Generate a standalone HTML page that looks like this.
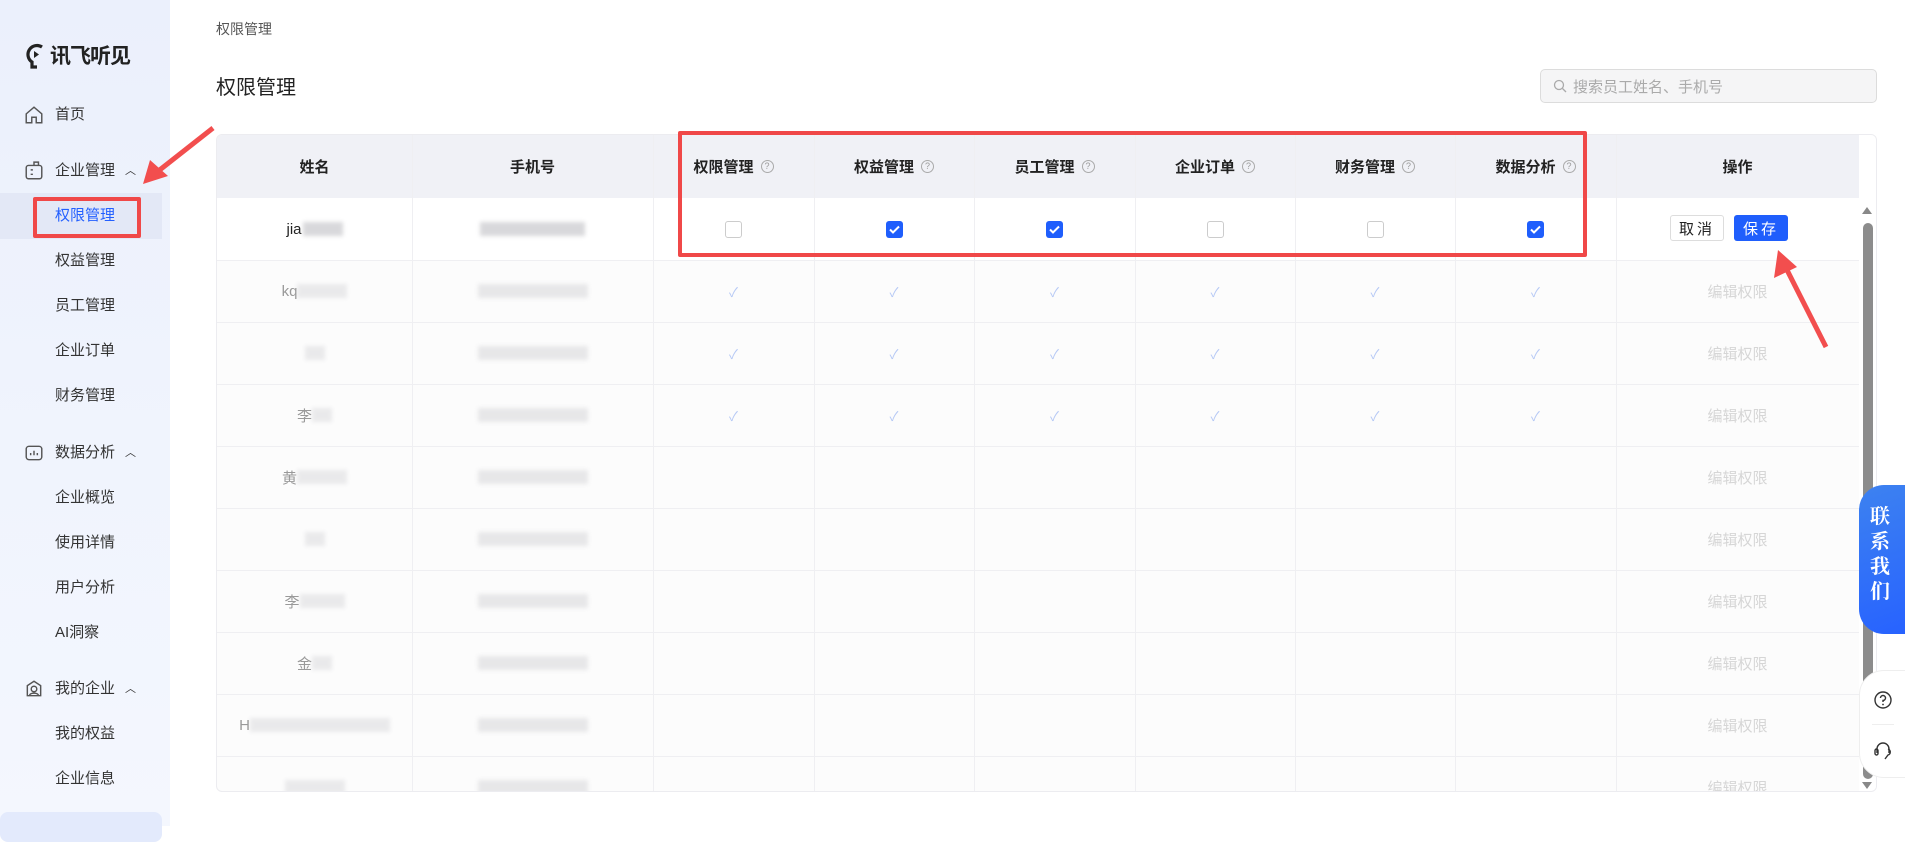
<!DOCTYPE html>
<html><head><meta charset="utf-8"><style>
*{margin:0;padding:0;box-sizing:border-box}
body{width:1905px;height:826px;overflow:hidden;background:#fff;font-family:"Liberation Sans","Noto Sans CJK SC",sans-serif;color:#333;position:relative}
.a{position:absolute}
.side{left:0;top:0;width:170px;height:826px;background:linear-gradient(180deg,#ebf0fc,#f4f7fe)}
.mi{position:absolute;left:55px;font-size:15px;color:#333;line-height:20px}
.sec{position:absolute;left:24px;font-size:15px;color:#333;line-height:20px;display:flex;align-items:center}
.sec svg{margin-right:11px}
.car{margin-left:10px;font-size:11px}
.tbl{left:216px;top:134px;width:1661px;height:658px;border:1px solid #ececf0;border-radius:6px;overflow:hidden;background:#fcfcfc}
.hd{position:absolute;top:0;left:0;height:63px;width:1642px;background:#f0f1f6}
.cell{position:absolute;display:flex;align-items:center;justify-content:center;font-size:15px}
.hcell{font-weight:bold;color:#222}
.q{display:inline-block;width:13px;height:13px;border:1px solid #aaa;border-radius:50%;font-size:9px;color:#999;line-height:11px;text-align:center;margin-left:7px;font-weight:normal}
.vl{position:absolute;top:0;width:1px;height:658px;background:#efeff2}
.hl{position:absolute;left:0;width:1642px;height:1px;background:#efeff2}
.cb{width:17px;height:17px;border:1px solid #ccc;border-radius:3px;background:#fff}
.cbx{width:17px;height:17px;border-radius:3px;background:#1f5efc;display:flex;align-items:center;justify-content:center}
.ck{color:#b5c8f5;font-size:13px}
.ed{color:#d6d6d6;font-size:15px}
.blur{display:inline-block;height:14px;background:#c8c8cc;filter:blur(2px);opacity:.7}
</style></head><body>
<div class="a side">
  <div class="a" style="left:26px;top:40px;display:flex;align-items:center">
    <svg width="20" height="30" viewBox="0 0 20 30"><path d="M16 7 A8 8 0 1 0 6 22 L6 27 L11 27" fill="none" stroke="#222" stroke-width="3.2"/><path d="M8 11 L13 14.5 L8 18Z" fill="#222"/></svg>
    <span style="font-size:21px;font-weight:bold;color:#222;margin-left:4px;letter-spacing:-1px">讯飞听见</span>
  </div>
  <div class="sec" style="top:105px"><svg width="20" height="20" viewBox="0 0 18 18"><path d="M2 8 L9 2 L16 8 V16 H11 V11 H7 V16 H2Z" fill="none" stroke="#555" stroke-width="1.3"/></svg>首页</div>
  <div class="sec" style="top:161px"><svg width="20" height="20" viewBox="0 0 18 18"><rect x="2" y="4" width="14" height="12" rx="2" fill="none" stroke="#555" stroke-width="1.3"/><path d="M9 4 V1 H13 V4 M6 8 H8 M6 12 H8" stroke="#555" stroke-width="1.3" fill="none"/></svg>企业管理<span class="car">︿</span></div>
  <div class="a" style="left:0;top:193px;width:162px;height:46px;background:#e3e8f6"></div>
  <div class="a" style="left:33px;top:197px;width:108px;height:41px;border:4px solid #f04848;border-radius:2px"></div>
  <div class="mi" style="top:206px;color:#2460ff">权限管理</div>
  <div class="mi" style="top:251px">权益管理</div>
  <div class="mi" style="top:296px">员工管理</div>
  <div class="mi" style="top:341px">企业订单</div>
  <div class="mi" style="top:386px">财务管理</div>
  <div class="sec" style="top:443px"><svg width="20" height="20" viewBox="0 0 18 18"><rect x="2" y="3" width="14" height="12" rx="2.5" fill="none" stroke="#555" stroke-width="1.3"/><path d="M6 11 V9 M9 11 V7 M12 11 V9" stroke="#555" stroke-width="1.3"/></svg>数据分析<span class="car">︿</span></div>
  <div class="mi" style="top:488px">企业概览</div>
  <div class="mi" style="top:533px">使用详情</div>
  <div class="mi" style="top:578px">用户分析</div>
  <div class="mi" style="top:623px">AI洞察</div>
  <div class="sec" style="top:679px"><svg width="20" height="20" viewBox="0 0 18 18"><path d="M3 15 V6 L9 2 L15 6 V15Z" fill="none" stroke="#555" stroke-width="1.3"/><circle cx="9" cy="9" r="2.5" fill="none" stroke="#555" stroke-width="1.3"/><path d="M5 15 C5 12 13 12 13 15" fill="none" stroke="#555" stroke-width="1.3"/></svg>我的企业<span class="car">︿</span></div>
  <div class="mi" style="top:724px">我的权益</div>
  <div class="mi" style="top:769px">企业信息</div>
  <div class="a" style="left:0;top:812px;width:162px;height:30px;background:#e3eafc;border-radius:8px"></div>
</div>

<div class="a" style="left:216px;top:19px;font-size:14px;color:#555">权限管理</div>
<div class="a" style="left:216px;top:71px;font-size:20px;color:#222">权限管理</div>
<div class="a" style="left:1540px;top:69px;width:337px;height:34px;border:1px solid #dcdcdc;border-radius:5px;background:#f5f5f6;display:flex;align-items:center;padding-left:12px;font-size:15px;color:#aaa">
  <svg width="14" height="14" viewBox="0 0 14 14" style="margin-right:6px"><circle cx="6" cy="6" r="4.5" fill="none" stroke="#aaa" stroke-width="1.3"/><path d="M9.5 9.5 L13 13" stroke="#aaa" stroke-width="1.3"/></svg>搜索员工姓名、手机号
</div>

<div class="a tbl">
  <div class="hd"></div>
  <div class="a" style="left:0;top:63px;width:1642px;height:62px;background:#fff"></div>
  <div class="vl" style="left:195px"></div><div class="vl" style="left:436px"></div><div class="vl" style="left:597px"></div><div class="vl" style="left:757px"></div><div class="vl" style="left:918px"></div><div class="vl" style="left:1078px"></div><div class="vl" style="left:1238px"></div><div class="vl" style="left:1399px"></div>
  <div class="hl" style="top:125px"></div><div class="hl" style="top:187px"></div><div class="hl" style="top:249px"></div><div class="hl" style="top:311px"></div><div class="hl" style="top:373px"></div><div class="hl" style="top:435px"></div><div class="hl" style="top:497px"></div><div class="hl" style="top:559px"></div><div class="hl" style="top:621px"></div>
  <div class="cell hcell" style="left:0;top:0;width:195px;height:63px">姓名</div>
  <div class="cell hcell" style="left:195px;top:0;width:241px;height:63px">手机号</div>
  <div class="cell hcell" style="left:436px;top:0;width:161px;height:63px">权限管理<span class="q">?</span></div>
  <div class="cell hcell" style="left:597px;top:0;width:160px;height:63px">权益管理<span class="q">?</span></div>
  <div class="cell hcell" style="left:757px;top:0;width:161px;height:63px">员工管理<span class="q">?</span></div>
  <div class="cell hcell" style="left:918px;top:0;width:160px;height:63px">企业订单<span class="q">?</span></div>
  <div class="cell hcell" style="left:1078px;top:0;width:160px;height:63px">财务管理<span class="q">?</span></div>
  <div class="cell hcell" style="left:1238px;top:0;width:161px;height:63px">数据分析<span class="q">?</span></div>
  <div class="cell hcell" style="left:1399px;top:0;width:243px;height:63px">操作</div>
  <div class="cell" style="left:0;top:63px;width:195px;height:62px;color:#222">jia<span class="blur" style="width:40px;margin-left:1px"></span></div>
  <div class="cell" style="left:195px;top:63px;width:241px;height:62px"><span class="blur" style="width:105px"></span></div>
  <div class="cell" style="left:436px;top:63px;width:161px;height:62px"><div class="cb"></div></div>
  <div class="cell" style="left:597px;top:63px;width:160px;height:62px"><div class="cbx"><svg width="11" height="9" viewBox="0 0 11 9"><path d="M1 4.5 L4 7.5 L10 1.5" fill="none" stroke="#fff" stroke-width="2"/></svg></div></div>
  <div class="cell" style="left:757px;top:63px;width:161px;height:62px"><div class="cbx"><svg width="11" height="9" viewBox="0 0 11 9"><path d="M1 4.5 L4 7.5 L10 1.5" fill="none" stroke="#fff" stroke-width="2"/></svg></div></div>
  <div class="cell" style="left:918px;top:63px;width:160px;height:62px"><div class="cb"></div></div>
  <div class="cell" style="left:1078px;top:63px;width:160px;height:62px"><div class="cb"></div></div>
  <div class="cell" style="left:1238px;top:63px;width:161px;height:62px"><div class="cbx"><svg width="11" height="9" viewBox="0 0 11 9"><path d="M1 4.5 L4 7.5 L10 1.5" fill="none" stroke="#fff" stroke-width="2"/></svg></div></div>
  <div class="a" style="left:1453px;top:80px;width:54px;height:26px;border:1px solid #ddd;border-radius:3px;background:#fff;font-size:15px;display:flex;align-items:center;justify-content:center;letter-spacing:3px;color:#222">取消</div>
  <div class="a" style="left:1517px;top:80px;width:54px;height:26px;border-radius:3px;background:#1f5efc;font-size:15px;display:flex;align-items:center;justify-content:center;letter-spacing:3px;color:#fff">保存</div>
  <div id="rows"></div>
  <div class="a" style="left:1642px;top:0;width:19px;height:658px;background:#fff"></div>
  <div class="a" style="left:1645px;top:72px;width:0;height:0;border-left:5px solid transparent;border-right:5px solid transparent;border-bottom:7px solid #888"></div>
  <div class="a" style="left:1646px;top:88px;width:10px;height:556px;background:#8c8c8c;border-radius:5px"></div>
  <div class="a" style="left:1645px;top:647px;width:0;height:0;border-left:5px solid transparent;border-right:5px solid transparent;border-top:7px solid #888"></div>
</div>

<div class="a" style="left:1859px;top:485px;width:50px;height:149px;border-radius:25px 0 0 25px;background:linear-gradient(160deg,#3d82f0,#2762ff);color:#fff;font-size:20px;line-height:25px;text-align:center;padding-top:20px;padding-right:8px;font-family:'Liberation Serif','Noto Serif CJK SC',serif;font-weight:bold">联<br>系<br>我<br>们</div>
<div class="a" style="left:1859px;top:670px;width:50px;height:108px;border-radius:25px 0 0 25px;background:#fff;border:1px solid #eee"></div>
<svg class="a" style="left:1873px;top:690px" width="20" height="20" viewBox="0 0 20 20"><circle cx="10" cy="10" r="8" fill="none" stroke="#333" stroke-width="1.4"/><path d="M7.5 8 A2.5 2.5 0 1 1 10 10.5 V12" fill="none" stroke="#333" stroke-width="1.4"/><circle cx="10" cy="14.5" r="0.9" fill="#333"/></svg>
<div class="a" style="left:1872px;top:724px;width:22px;height:1px;background:#eee"></div>
<svg class="a" style="left:1873px;top:740px" width="20" height="22" viewBox="0 0 20 22"><path d="M4 13 V9 A6 6 0 0 1 16 9 V13" fill="none" stroke="#333" stroke-width="1.4"/><rect x="2" y="9" width="3" height="6" rx="1.5" fill="none" stroke="#333" stroke-width="1.4"/><path d="M15 9 C18 10 18 14 15 15 L12 19" fill="none" stroke="#333" stroke-width="1.4"/></svg>

<div class="a" style="left:678px;top:131px;width:909px;height:126px;border:4px solid #f04848;border-radius:2px"></div>
<svg class="a" style="left:0;top:0" width="1905" height="826">
  <path d="M213 128 L152 176" stroke="#f24e4e" stroke-width="5"/>
  <polygon points="143,184 150,160 168,176" fill="#f24e4e"/>
  <path d="M1826 347 L1785 266" stroke="#f24e4e" stroke-width="5"/>
  <polygon points="1778,250 1774,278 1797,267" fill="#f24e4e"/>
</svg>
<script>
var r=document.getElementById('rows'),h='';
var cols=[436,597,757,918,1078,1238],w=[161,160,161,160,160,161];
var names=['kq','','李','黄','','李','金','H','','',''];
var nw=[50,20,20,50,20,45,20,140,60];
for(var i=0;i<9;i++){var t=125+i*62;
h+='<div class="cell" style="left:0;top:'+t+'px;width:195px;height:62px;color:#999">'+names[i]+'<span class="blur" style="width:'+nw[i]+'px;opacity:.35"></span></div>';
h+='<div class="cell" style="left:195px;top:'+t+'px;width:241px;height:62px"><span class="blur" style="width:110px;opacity:.4"></span></div>';
if(i<3)for(var j=0;j<6;j++)h+='<div class="cell ck" style="left:'+cols[j]+'px;top:'+t+'px;width:'+w[j]+'px;height:62px">✓</div>';
h+='<div class="cell ed" style="left:1399px;top:'+t+'px;width:243px;height:62px">编辑权限</div>';}
r.innerHTML=h;
</script>
</body></html>
